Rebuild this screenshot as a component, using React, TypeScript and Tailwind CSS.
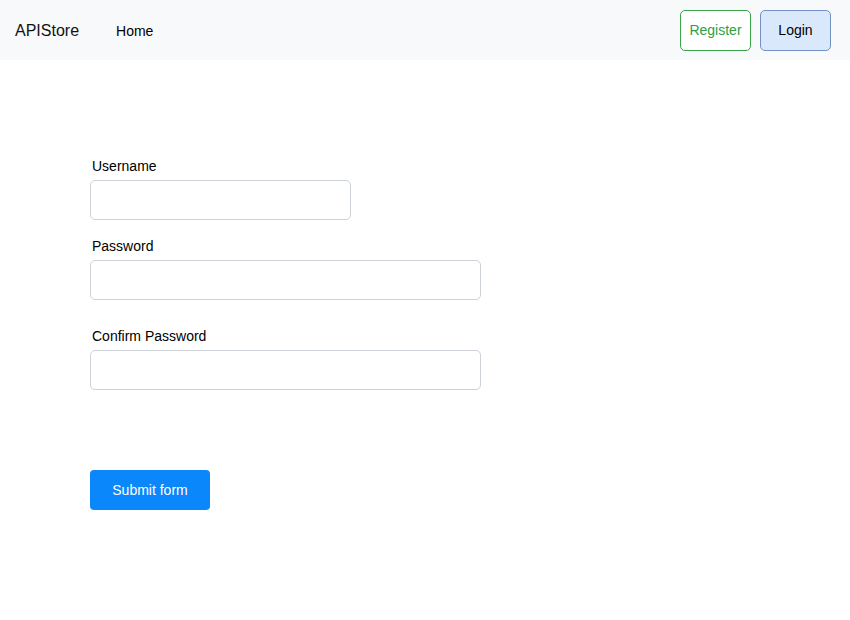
import React from "react";

const Field: React.FC<{ label: string; type?: string; width: string }> = ({
  label,
  type = "text",
  width,
}) => (
  <div className="flex flex-col gap-[4px]">
    <label className="ml-[2px] text-[14px] leading-[20px] text-black">{label}</label>
    <input
      type={type}
      className={`${width} h-[40px] rounded-[5px] border border-[#cdd2d8] bg-white px-3 text-sm outline-none`}
    />
  </div>
);

const App: React.FC = () => {
  return (
    <div className="min-h-[620px] bg-white font-['Liberation_Sans',Arial,sans-serif] text-black">
      {/* Navbar */}
      <nav className="flex h-[60px] items-center bg-[#f8f9fb] pl-[15px] pr-[19px]">
        <span className="mt-[2px] text-[16px] text-[#111]">APIStore</span>
        <a className="ml-[37px] mt-[2px] text-[14px] text-black">Home</a>
        <div className="ml-auto flex gap-[9px]">
          <button className="h-[41px] w-[71px] rounded-[5px] border-[1.5px] border-[#3aa64c] bg-white pt-[1px] text-[14px] text-[#2f9e44]">
            Register
          </button>
          <button className="h-[41px] w-[71px] rounded-[5px] border-[1.5px] border-[#7391c4] bg-[#dae8fc] pt-[1px] text-[14px] text-black">
            Login
          </button>
        </div>
      </nav>

      {/* Form */}
      <form className="flex flex-col pl-[90px] pt-[96px]">
        <Field label="Username" width="w-[261px]" />
        <div className="mt-[16px]">
          <Field label="Password" type="password" width="w-[391px]" />
        </div>
        <div className="mt-[26px]">
          <Field label="Confirm Password" type="password" width="w-[391px]" />
        </div>
        <div className="mt-[80px]">
          <button
            type="button"
            className="h-[40px] w-[120px] rounded-[4px] bg-[#0a87fb] pt-[1px] text-[14px] font-medium text-white"
          >
            Submit form
          </button>
        </div>
      </form>
    </div>
  );
};

export default App;
